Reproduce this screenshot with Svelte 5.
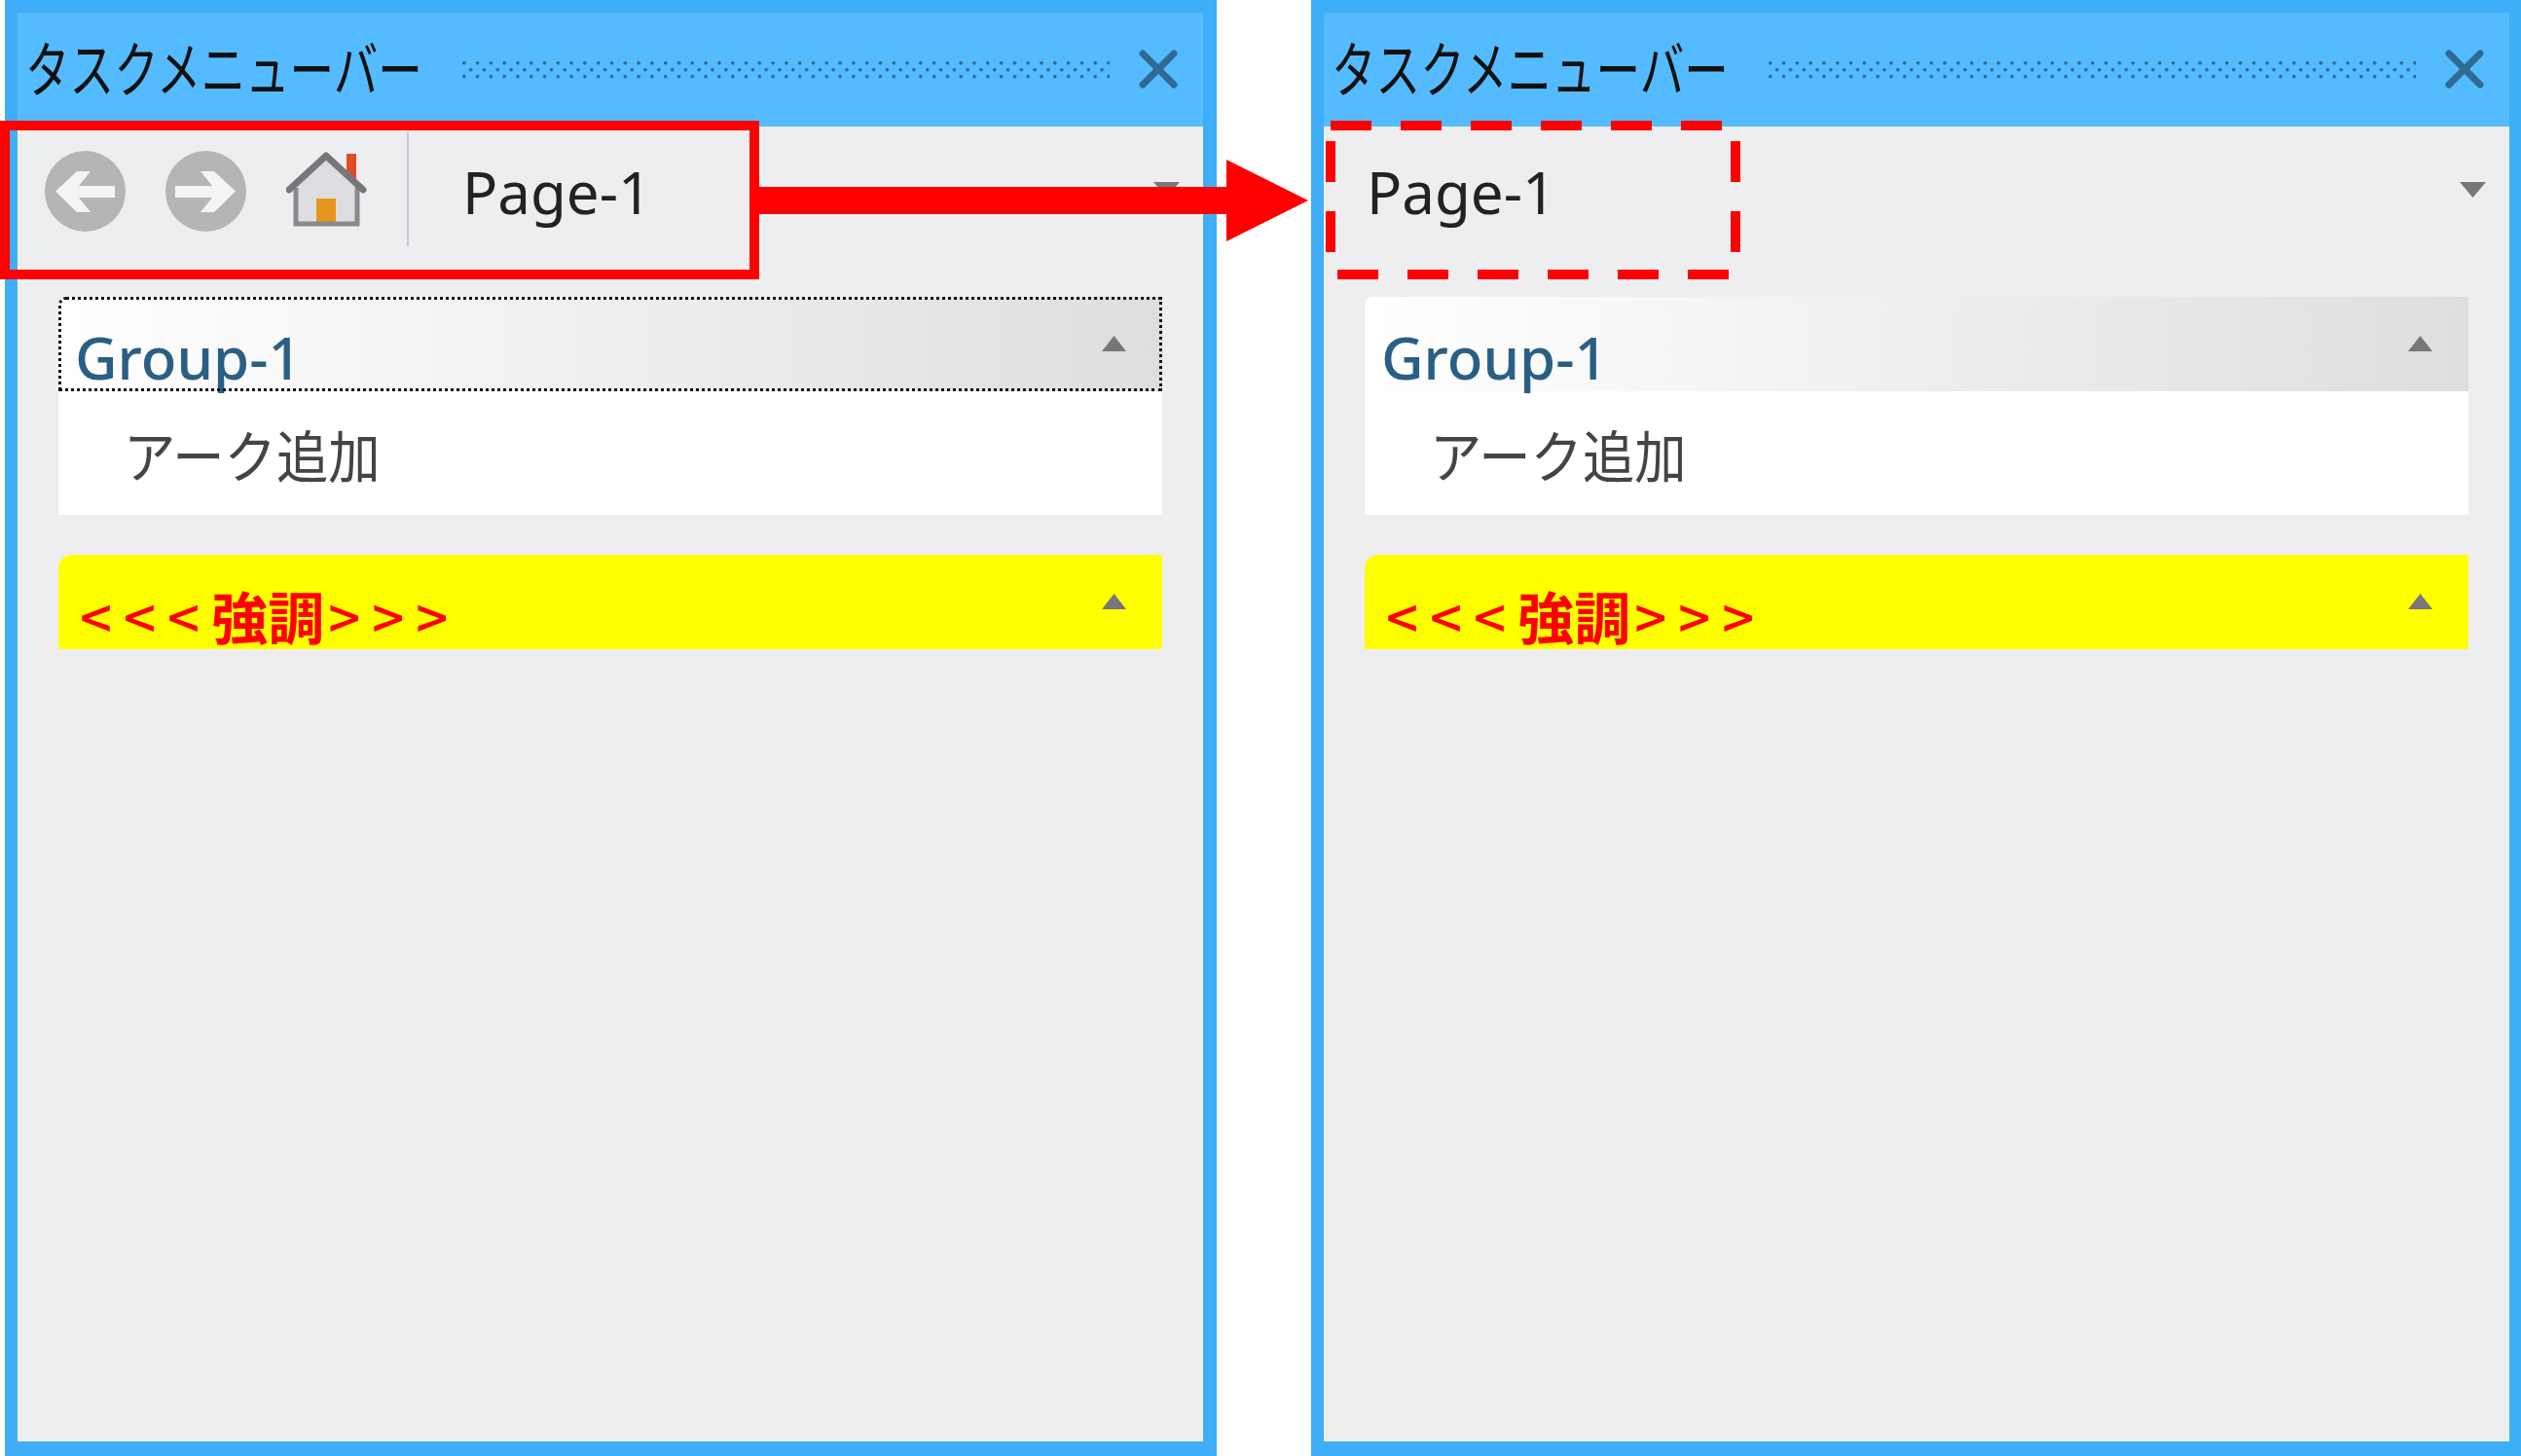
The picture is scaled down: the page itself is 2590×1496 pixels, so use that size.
<script>
  const groups = [
    { title: 'Group-1', items: ['アーク追加'], kind: 'plain' },
    { open: '<<<', title: '強調', close: '>>>', items: [], kind: 'accent' }
  ];
</script>

{#snippet chevronUp()}
  <svg class="chev" width="25" height="16" viewBox="0 0 25 16"><path d="M12.5 0 25 16H0z" fill="#77777a" /></svg>
{/snippet}

{#snippet panel(withNav, focused)}
  <section class="panel" class:nav={withNav}>
    <header class="titlebar">
      <div class="title"><span>タスクメニューバー</span></div>
      <div class="grip"></div>
      <svg class="close" width="40" height="40" viewBox="0 0 40 40">
        <path d="M4 4 36 36M36 4 4 36" stroke="#2f6a92" stroke-width="7" stroke-linecap="round" fill="none" />
      </svg>
    </header>
    <div class="body">
      <div class="toolbar">
        {#if withNav}
          <div class="navs">
            <svg width="83" height="83" viewBox="0 0 83 83">
              <circle cx="41.5" cy="41.5" r="41.5" fill="#b5b5b7" />
              <path d="M11 41.5 33 21h14L35 36h37v12H35l12 15H33z" fill="#f4f4f6" />
            </svg>
            <svg width="83" height="83" viewBox="0 0 83 83">
              <circle cx="41.5" cy="41.5" r="41.5" fill="#b5b5b7" />
              <path d="M72 41.5 50 21H36l12 15H10v12h38L36 63h14z" fill="#f4f4f6" />
            </svg>
            <svg width="83" height="80" viewBox="0 0 83 80">
              <path d="M62 3h10v30H62z" fill="#dc4f28" />
              <path d="M41 4 10 35v40h63V35z" fill="#dedee2" />
              <path d="M31 49h20v26H31z" fill="#e8951f" />
              <path d="M10 38v37h63V38" fill="none" stroke="#8a8a8c" stroke-width="5" />
              <path d="M3 40 41 5l38 35" fill="none" stroke="#77777a" stroke-width="7" stroke-linecap="round" stroke-linejoin="round" />
            </svg>
          </div>
          <div class="sep"></div>
        {/if}
        <div class="page">Page-1</div>
        <svg class="drop" width="27" height="16" viewBox="0 0 27 16"><path d="M0 0h27L13.5 16z" fill="#77777a" /></svg>
      </div>
      <div class="groups">
        {#each groups as g, i}
          <div class="group">
            <div class="head {g.kind}" class:focused={focused && i === 0}>
              <span class="head-text">
                {#if g.open}<span class="spaced">{g.open}</span>{/if}{g.title}{#if g.close}<span class="spaced after">{g.close}</span>{/if}
              </span>
              {@render chevronUp()}
            </div>
            {#if g.items.length}
              <ul class="items">
                {#each g.items as item}
                  <li><span>{item}</span></li>
                {/each}
              </ul>
            {/if}
          </div>
        {/each}
      </div>
    </div>
  </section>
{/snippet}

<main class="page-root">
  {@render panel(true, true)}
  {@render panel(false, false)}

  <!-- annotations drawn over the screenshot -->
  <svg class="marks" width="2590" height="1496" viewBox="0 0 2590 1496">
    <rect x="5" y="129" width="770" height="153" fill="none" stroke="#ff0000" stroke-width="10" />
    <path d="M780 192H1260V164L1344 206 1260 248V220H780z" fill="#ff0000" />
    <rect x="1367" y="129" width="416" height="153" fill="none" stroke="#ff0000" stroke-width="10" stroke-dasharray="42 30" />
  </svg>
</main>

<style>
  :global(body) {
    margin: 0;
    background: #fff;
    font-family: "Noto Sans", "Noto Sans CJK JP", sans-serif;
  }

  .page-root {
    position: relative;
    width: 2590px;
    height: 1496px;
    display: flex;
    padding-left: 5px;
    gap: 97px;
    box-sizing: border-box;
    overflow: hidden;
  }

  .marks {
    position: absolute;
    left: 0;
    top: 0;
  }

  .panel {
    flex: 0 0 1245px;
    min-width: 0;
    height: 1496px;
    box-sizing: border-box;
    border: solid #3daef7;
    border-width: 13px 14px 15px 13px;
    display: flex;
    flex-direction: column;
    background: #eeeef1;
  }

  .titlebar {
    height: 117px;
    flex: none;
    background: #55bbff;
    display: flex;
    align-items: center;
    padding-bottom: 8px;
    box-sizing: border-box;
  }

  .title {
    flex: 0 0 457px;
    min-width: 0;
    padding-left: 8px;
    box-sizing: border-box;
    font: 62px/1 "Noto Sans CJK JP", sans-serif;
    color: #111;
    white-space: nowrap;
  }

  .title span {
    display: inline-block;
    transform: scaleX(0.735);
    transform-origin: left center;
  }

  .grip {
    flex: 0 0 665px;
    height: 18px;
    background-image:
      radial-gradient(circle at 1.8px 1.8px, #2a6a94 1.5px, transparent 2px),
      radial-gradient(circle at 8.7px 8.7px, #2a6a94 1.5px, transparent 2px);
    background-size: 13.8px 13.8px;
    margin-top: 8px;
  }

  .close {
    margin-left: 30px;
    flex: none;
    margin-top: 6px;
  }

  .body {
    flex: 1;
    display: flex;
    flex-direction: column;
    border: solid #f8f3f1;
    border-width: 0 1px 2px 1px;
    min-height: 0;
  }

  .toolbar {
    height: 123px;
    flex: none;
    display: flex;
    align-items: flex-start;
    padding: 5px 23px 0 27px;
    box-sizing: border-box;
    margin-bottom: 52px;
  }

  .panel:not(.nav) .toolbar {
    padding-left: 43px;
  }

  .navs {
    display: flex;
    gap: 41px;
    padding-top: 20px;
    flex: none;
  }

  .sep {
    width: 2px;
    height: 118px;
    background: #c9c9d9;
    margin: 0 55px 0 41px;
    flex: none;
  }

  .page {
    flex: 1;
    font-size: 60px;
    line-height: 82px;
    padding-top: 21px;
    color: #222;
  }

  .drop {
    flex: none;
    margin-top: 52px;
  }

  .groups {
    display: flex;
    flex-direction: column;
    gap: 41px;
    padding: 0 41px;
  }

  .head {
    height: 97px;
    box-sizing: border-box;
    display: flex;
    align-items: flex-end;
    justify-content: space-between;
    padding: 0 37px 0 17px;
    border-radius: 8px 0 0 0;
    position: relative;
  }

  .head.plain {
    background: linear-gradient(90deg, #ffffff 0%, #dedede 100%);
    color: #2a5f85;
    font-weight: 500;
    font-size: 60px;
  }

  .head.focused {
    outline: 3px dotted #111;
    outline-offset: -3px;
  }

  .head.accent {
    background: #ffff00;
    color: #ff0000;
    font-weight: 700;
    font-size: 58px;
    font-family: "Noto Sans CJK JP", sans-serif;
    padding-left: 22px;
    border-radius: 14px 0 0 0;
  }

  .head-text {
    line-height: 70px;
    white-space: nowrap;
  }

  .spaced {
    font-weight: 500;
    letter-spacing: 12px;
  }

  .spaced.after {
    margin-left: 4px;
  }

  .chev {
    align-self: flex-start;
    margin-top: 40px;
  }

  .items {
    list-style: none;
    margin: 0;
    padding: 0;
    background: #fff;
    height: 127px;
  }

  .items li {
    padding: 30px 0 0 67px;
    font: 58px/1.2 "Noto Sans CJK JP", sans-serif;
    color: #444;
    white-space: nowrap;
  }

  .items span {
    display: inline-block;
    transform: scaleX(0.92);
    transform-origin: left center;
  }
</style>
